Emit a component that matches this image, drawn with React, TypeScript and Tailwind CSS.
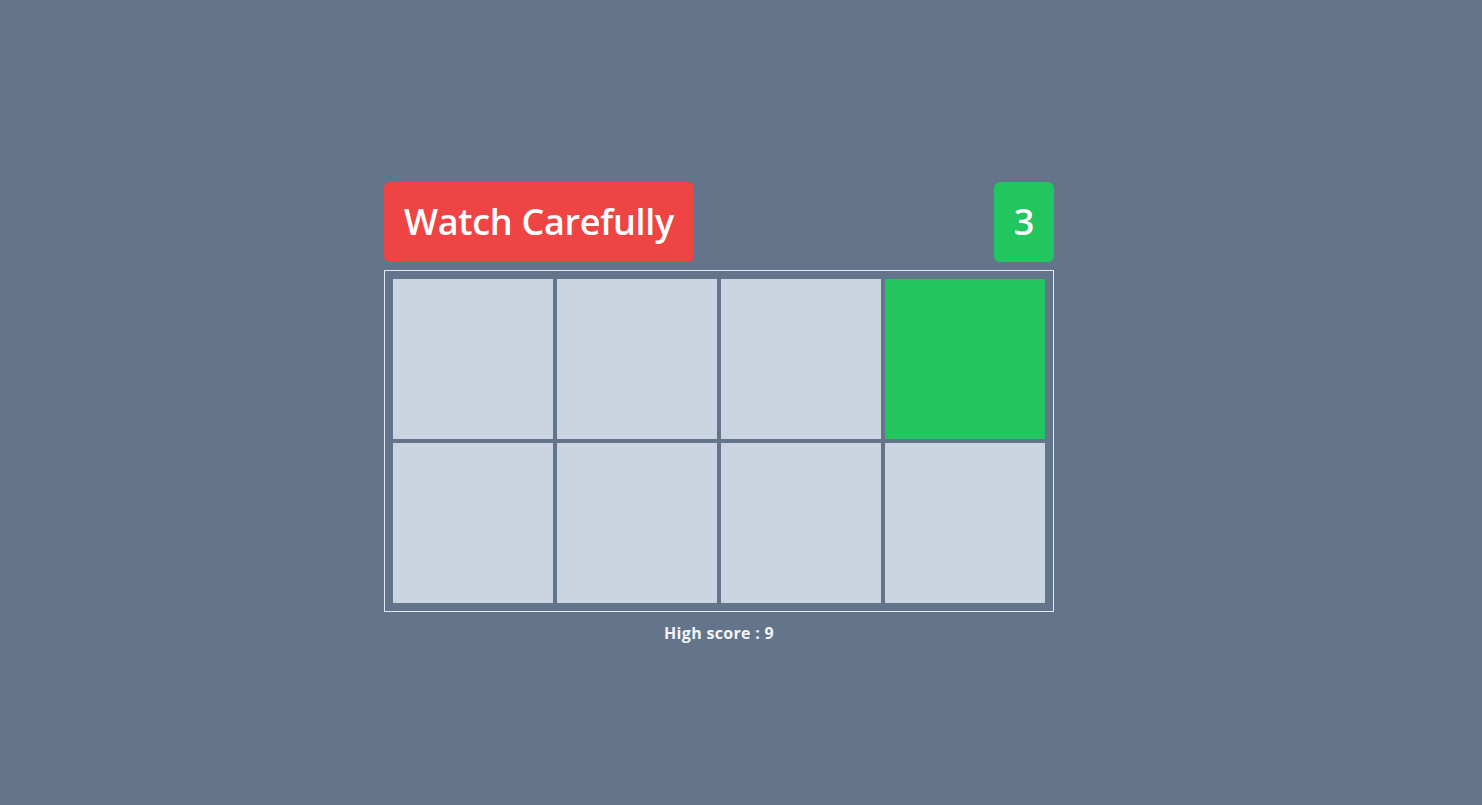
import React from 'react'

const tiles = [0, 1, 2, 3, 4, 5, 6, 7]
const lit = 3

const App: React.FC = () => {
    return (
        <div className="min-h-screen w-full bg-[#64748b] pt-[182px] pl-[384px] font-['Open_Sans',sans-serif]">
            <div className="w-[670px]">
                <div className="flex items-center justify-between">
                    <div className="rounded-md bg-[#ef4444] px-5 py-5 text-4xl leading-10 font-semibold tracking-[-0.3px] text-white">
                        Watch Carefully
                    </div>
                    <div className="w-[60px] rounded-md bg-[#22c55e] py-5 text-center text-4xl leading-10 font-semibold text-white">
                        3
                    </div>
                </div>
                <div className="mt-2 grid grid-cols-4 gap-1 border border-[#e2e8f0] p-2">
                    {tiles.map((t) => (
                        <div
                            key={t}
                            className={t === lit ? 'h-[160px] bg-[#22c55e]' : 'h-[160px] bg-[#cbd5e1]'}
                        ></div>
                    ))}
                </div>
                <p className="mt-[9px] text-center text-base leading-6 font-bold tracking-[0.3px] text-[#f1f5f9]">High score : 9</p>
            </div>
        </div>
    )
}

export default App
